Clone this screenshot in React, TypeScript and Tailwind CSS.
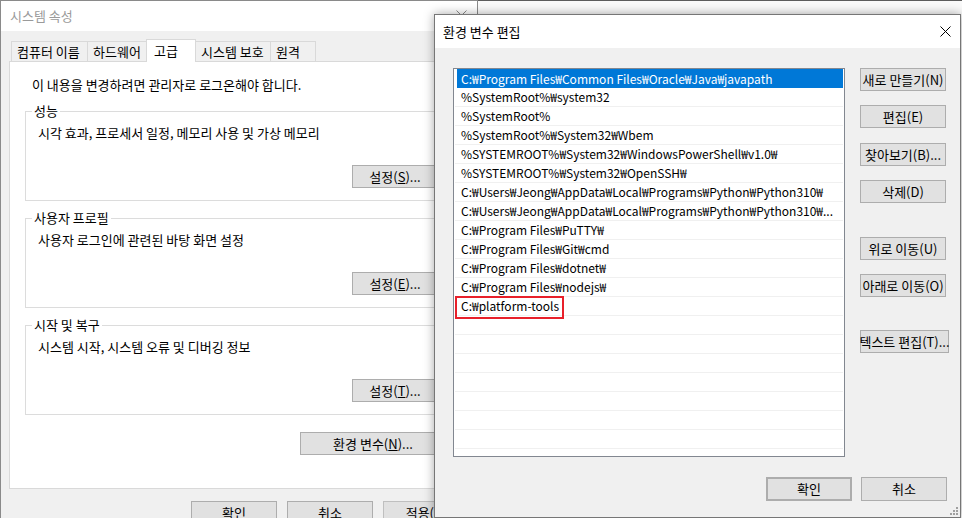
import type { ReactNode } from 'react'

const paths = [
  'C:₩Program Files₩Common Files₩Oracle₩Java₩javapath',
  '%SystemRoot%₩system32',
  '%SystemRoot%',
  '%SystemRoot%₩System32₩Wbem',
  '%SYSTEMROOT%₩System32₩WindowsPowerShell₩v1.0₩',
  '%SYSTEMROOT%₩System32₩OpenSSH₩',
  'C:₩Users₩Jeong₩AppData₩Local₩Programs₩Python₩Python310₩',
  'C:₩Users₩Jeong₩AppData₩Local₩Programs₩Python₩Python310₩...',
  'C:₩Program Files₩PuTTY₩',
  'C:₩Program Files₩Git₩cmd',
  'C:₩Program Files₩dotnet₩',
  'C:₩Program Files₩nodejs₩',
  'C:₩platform-tools',
]

function Btn({ children, className = '' }: { children: ReactNode; className?: string }) {
  return (
    <div
      className={`flex items-center justify-center h-[23px] bg-[#e1e1e1] border border-[#adadad] text-black whitespace-nowrap ${className}`}
    >
      {children}
    </div>
  )
}

function Group({ title, desc, btn, className = '' }: { title: string; desc: string; btn: ReactNode; className?: string }) {
  return (
    <fieldset className={`ml-[15px] w-[430px] h-[98px] border border-[#dcdcdc] ${className}`}>
      <legend className="ml-[6px] px-[2px] leading-[16px]">{title}</legend>
      <div className="pl-[12px] mt-[6px] leading-[16px]">{desc}</div>
      <div className="flex justify-end pr-[16px] mt-[24px]">
        <Btn className="w-[86px]">{btn}</Btn>
      </div>
    </fieldset>
  )
}

function CloseX({ className = '' }: { className?: string }) {
  return (
    <svg width="11" height="11" viewBox="0 0 11 11" className={className}>
      <path d="M0.5 0.5 L10.5 10.5 M10.5 0.5 L0.5 10.5" stroke="currentColor" strokeWidth="1" fill="none" />
    </svg>
  )
}

export default function App() {
  return (
    <div className="relative w-[962px] h-[518px] overflow-hidden bg-[#fafafa] text-[13px] text-black font-['Noto_Sans_CJK_KR',sans-serif]">
      {/* top edge of screen */}
      <div className="h-px bg-[#5c5c5c]" />

      {/* 시스템 속성 window (inactive) */}
      <div className="absolute left-0 top-0 w-[478px] h-[540px] border-l border-t border-r border-[#8a8a8a] bg-[#f0f0f0] flex flex-col">
        <div className="relative h-[30px] bg-white flex items-center pl-[9px] text-[#9a9a9a]">
          시스템 속성
          <CloseX className="absolute right-[10px] top-[9px] text-[#8a8a8a]" />
        </div>

        <div className="px-[8px] pt-[8px]">
          {/* tabs */}
          <div className="flex items-end h-[22px] pl-[2px]">
            <div className="w-[76px] h-[20px] border-l border-t border-[#d9d9d9] flex items-center pl-[5px]">컴퓨터 이름</div>
            <div className="w-[59px] h-[20px] border-l border-t border-[#d9d9d9] flex items-center pl-[5px]">하드웨어</div>
            <div className="relative z-10 w-[50px] h-[23px] -mb-px bg-white border-l border-t border-r border-[#d9d9d9] flex items-start pt-[1px] pl-[7px]">
              고급
            </div>
            <div className="w-[74px] h-[20px] border-t border-[#d9d9d9] flex items-center pl-[5px]">시스템 보호</div>
            <div className="w-[46px] h-[20px] border-l border-t border-r border-[#d9d9d9] flex items-center pl-[5px]">원격</div>
          </div>

          {/* tab panel */}
          <div className="h-[428px] bg-white border border-[#d9d9d9] flex flex-col">
            <div className="pl-[22px] mt-[15px] leading-[16px]">이 내용을 변경하려면 관리자로 로그온해야 합니다.</div>
            <Group
              className="mt-[10px]"
              title="성능"
              desc="시각 효과, 프로세서 일정, 메모리 사용 및 가상 메모리"
              btn={<>설정(<span className="underline">S</span>)...</>}
            />
            <Group
              className="mt-[9px]"
              title="사용자 프로필"
              desc="사용자 로그인에 관련된 바탕 화면 설정"
              btn={<>설정(<span className="underline">E</span>)...</>}
            />
            <Group
              className="mt-[9px]"
              title="시작 및 복구"
              desc="시스템 시작, 시스템 오류 및 디버깅 정보"
              btn={<>설정(<span className="underline">T</span>)...</>}
            />
            <div className="flex justify-end pr-[22px] mt-[17px]">
              <Btn className="w-[146px]">
                환경 변수(<span className="underline">N</span>)...
              </Btn>
            </div>
          </div>

          {/* bottom buttons */}
          <div className="flex justify-end gap-[10px] mt-[12px]">
            <Btn className="w-[86px]">확인</Btn>
            <Btn className="w-[86px]">취소</Btn>
            <Btn className="w-[86px] bg-[#cccccc] border-[#bfbfbf] text-[#a0a0a0]">적용(A)</Btn>
          </div>
        </div>
      </div>

      {/* 환경 변수 편집 dialog (active) */}
      <div className="absolute left-[434px] top-[14px] w-[527px] h-[504px] border border-[#767676] bg-[#f0f0f0] flex flex-col shadow-[0_0_10px_rgba(0,0,0,0.35)]">
        <div className="h-[33px] bg-white flex items-center justify-between pl-[8px] pr-[9px] shrink-0">
          <span>환경 변수 편집</span>
          <CloseX className="text-black" />
        </div>

        <div className="flex pl-[18px] pt-[20px]">
          {/* list */}
          <div className="w-[392px] h-[389px] border border-[#828790] bg-white overflow-hidden text-[12px]">
            {paths.map((p, i) =>
              i === 0 ? (
                <div key={i} className="h-[19px] ml-[3px] mr-px bg-[#0078d7] text-white flex items-center pl-[4px] whitespace-nowrap leading-[18px]">
                  {p}
                </div>
              ) : (
                <div key={i} className="relative h-[19px] mx-px border-b border-[#f0f0f0] flex items-center pl-[6px] whitespace-nowrap leading-[18px]">
                  {p}
                  {p === 'C:₩platform-tools' && (
                    <div className="absolute left-0 top-[-1px] w-[109px] h-[23px] border-2 border-[#e8202a]" />
                  )}
                </div>
              )
            )}
            {Array.from({ length: 8 }).map((_, i) => (
              <div key={`e${i}`} className="h-[19px] mx-px border-b border-[#f0f0f0]" />
            ))}
          </div>

          {/* side buttons */}
          <div className="flex flex-col ml-[15px]">
            <Btn className="w-[86px]">새로 만들기(N)</Btn>
            <Btn className="w-[86px] mt-[14px]">편집(E)</Btn>
            <Btn className="w-[86px] mt-[15px]">찾아보기(B)...</Btn>
            <Btn className="w-[86px] mt-[14px]">삭제(D)</Btn>
            <Btn className="w-[86px] mt-[34px]">위로 이동(U)</Btn>
            <Btn className="w-[86px] mt-[14px]">아래로 이동(O)</Btn>
            <Btn className="w-[89px] mt-[33px]">텍스트 편집(T)...</Btn>
          </div>
        </div>

        <div className="flex justify-end gap-[9px] pr-[13px] mt-[20px]">
          <Btn className="w-[86px] h-[24px] border-2 border-[#0078d7]">확인</Btn>
          <Btn className="w-[86px] h-[24px]">취소</Btn>
        </div>

        {/* size grip */}
        <svg width="9" height="9" viewBox="0 0 9 9" className="absolute right-[2px] bottom-[2px]">
          <rect x="7" y="1" width="2" height="2" fill="#a0a0a0" />
          <rect x="4" y="4" width="2" height="2" fill="#a0a0a0" />
          <rect x="7" y="4" width="2" height="2" fill="#a0a0a0" />
          <rect x="1" y="7" width="2" height="2" fill="#a0a0a0" />
          <rect x="4" y="7" width="2" height="2" fill="#a0a0a0" />
          <rect x="7" y="7" width="2" height="2" fill="#a0a0a0" />
        </svg>
      </div>
    </div>
  )
}
